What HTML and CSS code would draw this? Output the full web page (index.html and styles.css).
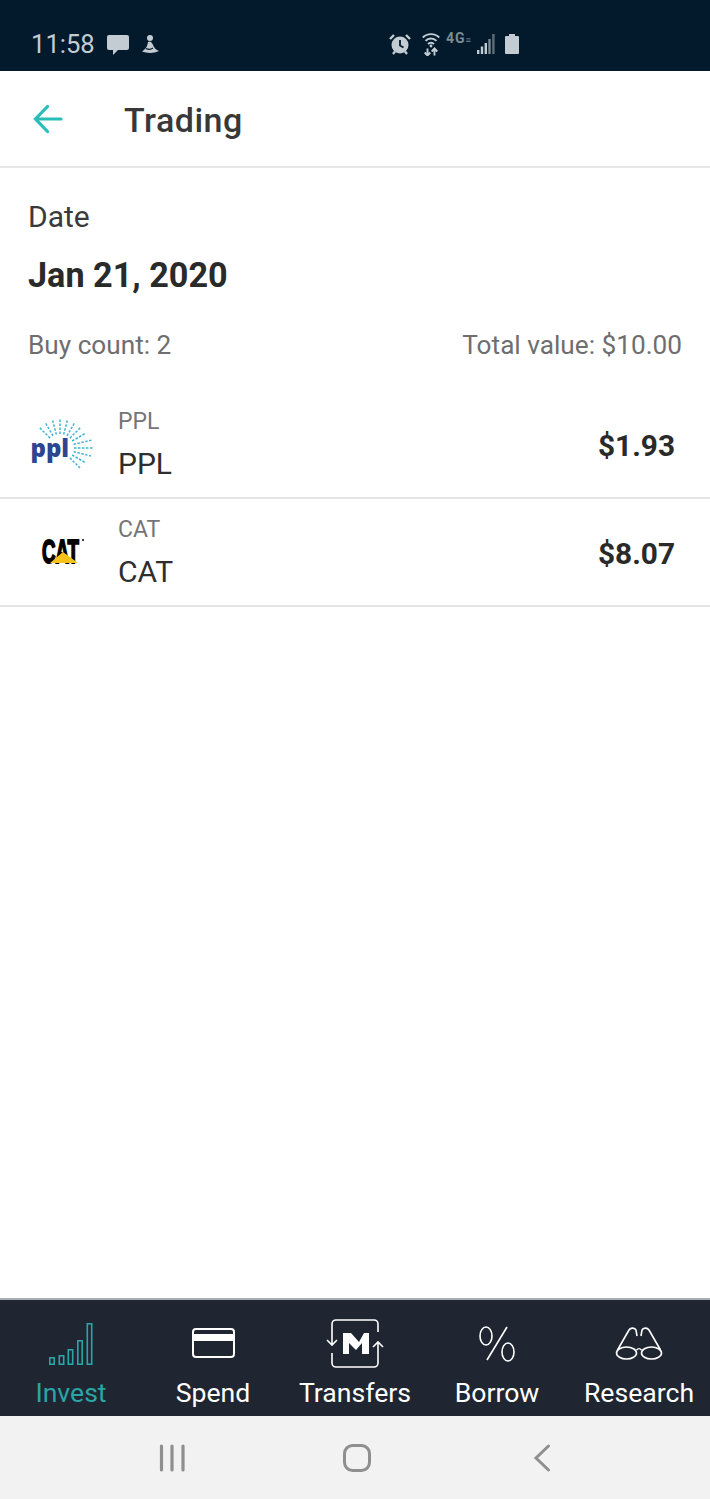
FILE: index.html
```html
<!DOCTYPE html>
<html lang="en">
<head>
<meta charset="utf-8">
<title>Trading</title>
<link rel="stylesheet" href="styles.css">
</head>
<body>
<div class="phone">
  <div class="statusbar">
    <div class="status-left">
      <span class="clock">11:58</span>
      <svg width="24" height="24" viewBox="0 0 24 24"><path d="M2 3h18a2 2 0 0 1 2 2v11a2 2 0 0 1-2 2H11l-5 5v-5H2a2 2 0 0 1-2-2V5a2 2 0 0 1 2-2z" fill="#c3ccd2"/></svg>
      <svg class="i-fig" width="20" height="22" viewBox="0 0 20 22"><circle cx="9" cy="5" r="3" fill="#c3ccd2"/><path d="M7 9c-.5 3-1 5-3.500 7.500L1 18.500c5 2 12 2 17-.5-2-1-4-2-5-4-1-2-1.500-4.500-4-5.500z" fill="#c3ccd2"/><path d="M5 15.500c2 1 5 1 7-.5" fill="none" stroke="#021a2b" stroke-width="1.200"/></svg>
    </div>
    <div class="status-right">
      <svg width="24" height="24" viewBox="0 0 24 24"><circle cx="12" cy="13" r="8.500" fill="#c3ccd2"/><path d="M12 8v5.500l3.500 2" fill="none" stroke="#021a2b" stroke-width="1.800"/><path d="M2 7l4-4M22 7l-4-4M5 22l2-2.500M19 22l-2-2.500" stroke="#c3ccd2" stroke-width="2.400"/></svg>
      <svg class="i-wifi" width="18" height="24" viewBox="0 0 18 24"><path d="M.8 5.500c4.500-4.500 12-4.500 16.400 0M3.500 8.800c3-3 8-3 11 0M6 12c1.700-1.700 4.300-1.700 6 0" fill="none" stroke="#c3ccd2" stroke-width="1.900"/><circle cx="9" cy="14" r="1.400" fill="#c3ccd2"/><path d="M5.500 16.500v7M2.700 20.500l2.800 3 2.800-3M12.500 23.500v-7M9.700 19.500l2.800-3 2.800 3" fill="none" stroke="#c3ccd2" stroke-width="1.900"/></svg>
      <span class="net">4G<small>≡</small></span>
      <svg class="i-sig" width="18" height="20" viewBox="0 0 18 20"><path d="M0 16h2.400v4H0z" fill="#c3ccd2"/><path d="M3.800 12.500h2.400V20H3.800z" fill="#c3ccd2"/><path d="M7.600 9h2.400v11H7.600z" fill="#c3ccd2"/><path d="M11.300 5h2.400v15h-2.400z" fill="#7d8b95"/><path d="M15.200 0h2.400v20h-2.400z" fill="#5e6d78"/></svg>
      <svg class="i-bat" width="14" height="20" viewBox="0 0 14 20"><path d="M4 0h6v2h3a1 1 0 0 1 1 1v16a1 1 0 0 1-1 1H1a1 1 0 0 1-1-1V3a1 1 0 0 1 1-1h3z" fill="#c3ccd2"/></svg>
    </div>
  </div>

  <header class="appbar">
    <svg class="back" width="32" height="32" viewBox="0 0 32 32"><path d="M29 16H4M15.500 3.500L3.500 16l12 12.500" fill="none" stroke="#27bdb8" stroke-width="3.200" stroke-linecap="round"/></svg>
    <h1 class="title">Trading</h1>
  </header>

  <main class="content">
    <section class="summary">
      <div class="date-label">Date</div>
      <div class="date-value">Jan 21, 2020</div>
      <div class="counts">
        <span>Buy count: 2</span>
        <span>Total value: $10.00</span>
      </div>
    </section>

    <ul class="rows">
      <li class="row">
        <div class="logo">
          <svg width="66" height="54" viewBox="0 0 66 54">
            <path class="rays" d="M22.100 21.100L11.500 10.500M25 18.900L17.500 5.900M28.400 17.500L24.500 3M32 17V2M35.600 17.500L39.500 3M39 18.900L46.500 5.900M41.900 21.100L52.500 10.500M44.100 24L57.100 16.500M45.500 27.400L64 23M46 31H65M45.500 34.600L63 39M44.100 38L58 46M41.900 40.900L52 51"/>
            <text class="ppl" x="2.500" y="40">ppl</text>
          </svg>
        </div>
        <div class="names"><span class="ticker">PPL</span><span class="name">PPL</span></div>
        <div class="amount">$1.93</div>
      </li>
      <li class="row">
        <div class="logo">
          <svg width="66" height="54" viewBox="0 0 66 54">
            <text class="cat" transform="translate(14 38) scale(0.55 1)">CAT</text>
            <path d="M22 38L35 27l15 11z" fill="#f7c21b"/>
            <circle cx="55" cy="15" r="1" fill="#000"/>
          </svg>
        </div>
        <div class="names"><span class="ticker">CAT</span><span class="name">CAT</span></div>
        <div class="amount">$8.07</div>
      </li>
    </ul>
  </main>

  <nav class="tabbar">
    <div class="tab active">
      <svg width="46" height="50" viewBox="0 0 46 50"><g fill="none" stroke="#2aa5a5" stroke-width="1.600"><rect x="1.800" y="39.800" width="4.400" height="6.400"/><rect x="11.300" y="37.800" width="4.400" height="8.400"/><rect x="20.300" y="31.800" width="4.400" height="14.400"/><rect x="29.800" y="22.800" width="4.400" height="23.400"/><rect x="39.300" y="5.800" width="4.400" height="40.400"/></g></svg>
      <span>Invest</span>
    </div>
    <div class="tab">
      <svg width="46" height="50" viewBox="0 0 46 50"><rect x="3" y="11" width="41" height="28" rx="3" fill="none" stroke="#fff" stroke-width="2"/><path d="M3 16h41v7H3z" fill="#fff"/></svg>
      <span>Spend</span>
    </div>
    <div class="tab">
      <svg width="60" height="52" viewBox="0 0 60 52"><path d="M7 27V6a4 4 0 0 1 4-4h38a4 4 0 0 1 4 4v8M7 35v10a4 4 0 0 0 4 4h38a4 4 0 0 0 4-4V24M2 22l5 5 5-5M48 29l5-5 5 5" fill="none" stroke="#fff" stroke-width="1.600"/><path d="M18 15h8l8 9 5-9h5v21h-7V25l-6 7-7-7v11h-6z" fill="#fff"/></svg>
      <span>Transfers</span>
    </div>
    <div class="tab">
      <svg width="40" height="50" viewBox="0 0 40 50"><g fill="none" stroke="#fff" stroke-width="1.600"><ellipse cx="9" cy="18" rx="6" ry="9"/><ellipse cx="31" cy="34" rx="6" ry="9"/><path d="M30 9L10 42"/></g></svg>
      <span>Borrow</span>
    </div>
    <div class="tab">
      <svg width="48" height="50" viewBox="0 0 48 50"><g fill="none" stroke="#fff" stroke-width="1.600"><ellipse cx="11.500" cy="35" rx="10" ry="6"/><ellipse cx="36.500" cy="35" rx="10" ry="6"/><path d="M21.500 32c2-2 3-2 5 0M2.500 32L14 12c2-3 6-2 7 0l1 6M45.500 32L34 12c-2-3-6-2-7 0l-1 6"/></g></svg>
      <span>Research</span>
    </div>
  </nav>

  <div class="sysnav">
    <svg width="28" height="28" viewBox="0 0 28 28"><path d="M3.500 2v24M14 2v24M25 2v24" stroke="#8f8f8f" stroke-width="3.200" stroke-linecap="round"/></svg>
    <svg width="28" height="28" viewBox="0 0 28 28"><rect x="1.500" y="1.500" width="25" height="25" rx="8" fill="none" stroke="#8f8f8f" stroke-width="3"/></svg>
    <svg width="18" height="28" viewBox="0 0 18 28"><path d="M15.500 2L3 14l12.500 12" fill="none" stroke="#8f8f8f" stroke-width="3" stroke-linecap="round"/></svg>
  </div>
</div>
</body>
</html>
```
FILE: styles.css
```css
* { box-sizing: border-box; }
html, body { margin: 0; padding: 0; }
body { background: #fff; font-family: Roboto, "Liberation Sans", sans-serif; }
.phone { width: 710px; height: 1499px; display: flex; flex-direction: column; overflow: hidden; }

.statusbar { height: 71px; flex: none; background: #021a2b; display: flex; align-items: flex-end; padding: 0 0 14px 31px; color: #c3ccd2; }
.status-left { display: flex; align-items: center; width: 357px; height: 26px; }
.clock { font-size: 25.600px; line-height: 26px; margin-right: 12px; }
.i-fig { margin-left: 10px; }
.status-right { display: flex; align-items: center; height: 26px; }
.i-wifi { margin-left: 10px; }
.net { width: 26px; margin: -10px 0 0 6px; font-size: 14px; line-height: 14px; font-weight: 700; color: #7d8b95; letter-spacing: 1px; white-space: nowrap; }
.net small { font-size: 9px; }
.i-sig { margin-left: 5px; }
.i-bat { margin-left: 10px; }

.appbar { height: 97px; flex: none; display: flex; align-items: center; padding: 1px 0 0 32px; border-bottom: 2px solid #e8e8e8; }
.back { flex: none; }
.title { margin: 2px 0 0 60px; font-size: 34px; font-weight: 500; color: #383838; letter-spacing: 0.500px; }

.content { flex: 1; min-height: 0; }
.summary { padding: 32px 28px 0; }
.date-label { font-size: 30px; line-height: 34px; color: #3a3a3a; }
.date-value { margin-top: 21px; font-size: 34.200px; line-height: 40px; font-weight: 700; color: #2a2a2a; }
.counts { margin-top: 34px; display: flex; justify-content: space-between; font-size: 26.200px; line-height: 32px; color: #6e6e6e; }

.rows { list-style: none; margin: 30px 0 0; padding: 0; }
.row { height: 108px; display: flex; align-items: center; border-bottom: 2px solid #e4e4e4; padding: 0 35px 0 28px; }
.logo { width: 90px; flex: none; display: flex; align-items: center; }
.names { flex: 1; display: flex; flex-direction: column; padding-top: 3px; }
.ticker { font-size: 23px; line-height: 28px; color: #757575; }
.name { margin-top: 9px; font-size: 30px; line-height: 38px; color: #2e2e2e; }
.amount { padding-top: 2px; font-size: 29.800px; font-weight: 700; color: #2a2a2a; }
.rays { fill: none; stroke: #3fb4d8; stroke-width: 1.500px; stroke-dasharray: 2.500 1.500; }
.ppl { font-family: "Open Sans", sans-serif; font-size: 24px; font-weight: 800; fill: #2b4590; }
.cat { font-family: "Liberation Sans", sans-serif; font-size: 34px; font-weight: 700; fill: #000; stroke: #000; stroke-width: 2px; }

.tabbar { height: 118px; flex: none; background: #1f2632; border-top: 2px solid #a9adb2; display: grid; grid-template-columns: repeat(5, 1fr); }
.tab { position: relative; display: flex; flex-direction: column; align-items: center; justify-content: flex-end; padding-bottom: 7px; color: #fff; font-size: 26.600px; line-height: 32px; }
.tab svg { position: absolute; top: 18px; left: 50%; transform: translateX(-50%); }
.tab span { white-space: nowrap; }
.tab.active { color: #2aa5a5; }

.sysnav { height: 83px; flex: none; background: #f2f2f2; display: grid; grid-template-columns: repeat(3, 185px); justify-content: start; align-items: center; justify-items: center; padding: 0 0 0 79px; }
```
